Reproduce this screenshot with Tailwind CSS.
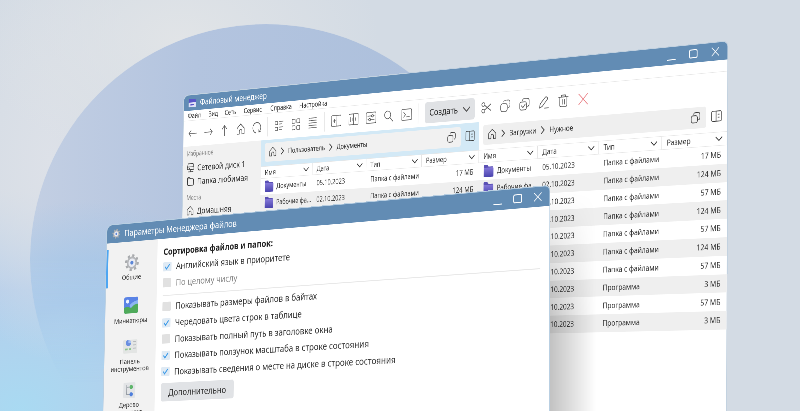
<!DOCTYPE html>
<html lang="ru">
<head>
    <meta charset="UTF-8">
    <meta name="viewport" content="width=device-width, initial-scale=1.0">
    <title>Файловый менеджер</title>
    <script src="https://cdn.jsdelivr.net/npm/@tailwindcss/browser@4"></script>
</head>
<body class="font-['Noto_Sans',sans-serif] text-[#333]">
<main class="relative w-[800px] h-[411px] overflow-hidden bg-[#d3dbe4]">

    <!-- icons -->
    <svg class="absolute w-0 h-0">
        <g class="*:fill-none *:stroke-current *:[stroke-width:1.7] *:[stroke-linecap:round] *:[stroke-linejoin:round]">
            <symbol id="i-back" viewBox="0 0 28 28"><path d="M26 14H2M9 7l-7 7 7 7"/></symbol>
            <symbol id="i-fwd" viewBox="0 0 28 28"><path d="M2 14h24M19 7l7 7-7 7"/></symbol>
            <symbol id="i-up" viewBox="0 0 28 28"><path d="M14 26V2M7 10l7-8 7 8"/></symbol>
            <symbol id="i-home" viewBox="0 0 28 28"><path d="M3 12 14 2l11 10v13h-7v-6c0-6-8-6-8 0v6H3z"/></symbol>
            <symbol id="i-reload" viewBox="0 0 28 28"><path d="M20 24a12 12 0 1 0-9 1.600M20 18v6h6"/></symbol>
            <symbol id="i-list" viewBox="0 0 28 28"><path d="M2 4h8v7H2zM2 17h8v7H2zM15 4h11M15 10h7M15 17h11M15 23h7"/></symbol>
            <symbol id="i-grid" viewBox="0 0 28 28"><rect x="3" y="2" width="9" height="9" rx="2"/><rect x="17" y="2" width="9" height="9" rx="2"/><rect x="3" y="17" width="9" height="9" rx="2"/><rect x="17" y="17" width="9" height="9" rx="2"/></symbol>
            <symbol id="i-lines" viewBox="0 0 28 28"><path d="M3 3h2M8 3h17M3 8.500h2M8 8.500h17M3 14h2M8 14h17M3 19.500h2M8 19.500h17M3 25h2M8 25h17"/></symbol>
            <symbol id="i-panel" viewBox="0 0 28 28"><rect x="0" y="2" width="28" height="24" rx="3"/><path d="M16 2v24M5 14h7M9 10.500v7"/></symbol>
            <symbol id="i-split" viewBox="0 0 28 28"><rect x="0" y="2" width="28" height="24" rx="3"/><path d="M14 2v24M6 9v10M10 11v6M19 11v6"/></symbol>
            <symbol id="i-side" viewBox="0 0 28 28"><rect x="1" y="2" width="26" height="24" rx="3"/><path d="M13 2v24M18 10h4M18 17h4"/></symbol>
            <symbol id="i-sliders" viewBox="0 0 28 28"><rect x="0" y="2" width="28" height="24" rx="3"/><path d="M5 10h10M21 10h2M5 18h2M13 18h10"/><circle cx="18" cy="10" r="2.500"/><circle cx="10" cy="18" r="2.500"/></symbol>
            <symbol id="i-search" viewBox="0 0 28 28"><circle cx="11" cy="11" r="8.500"/><path d="m17 17 9 9"/></symbol>
            <symbol id="i-term" viewBox="0 0 28 28"><rect x="0" y="2" width="28" height="24" rx="3"/><path d="m6 9 5 5-5 5M14 19h8"/></symbol>
            <symbol id="i-cut" viewBox="0 0 28 28"><circle cx="6" cy="7" r="4"/><circle cx="6" cy="21" r="4"/><path d="M9.500 9 26 21M9.500 19 26 7"/></symbol>
            <symbol id="i-copy" viewBox="0 0 28 28"><rect x="2" y="9" width="17" height="17" rx="5"/><path stroke-dasharray="2.500 3" d="M10 5c0-2 2-3 4-3h8c3 0 4 2 4 4v8c0 3-1 4-4 4"/></symbol>
            <symbol id="i-copy2" viewBox="0 0 28 28"><rect x="2" y="9" width="17" height="17" rx="5"/><path d="M9 6c0-3 2-4 5-4h7c4 0 5 2 5 5v7c0 3-1 5-4 5"/></symbol>
            <symbol id="i-check" viewBox="0 0 28 28"><rect x="2" y="9" width="17" height="17" rx="4"/><path d="M9 6c0-3 2-4 5-4h7c4 0 5 2 5 5v7c0 3-1 5-4 5M6 17l4 4 6-7"/></symbol>
            <symbol id="i-pen" viewBox="0 0 28 28"><path d="m3 25 2-9L18 3c3-2 7 2 5 5L10 22zM16 26h10"/></symbol>
            <symbol id="i-trash" viewBox="0 0 28 28"><path d="M2 6h24M9 6V2h10v4M5 6v17c0 2 1 3 3 3h12c2 0 3-1 3-3V6M11 11v10M17 11v10"/></symbol>
            <symbol id="i-x" viewBox="0 0 28 28"><path d="m3 3 22 22M25 3 3 25"/></symbol>
            <symbol id="i-close" viewBox="0 0 20 20"><path d="m2 2 16 16M18 2 2 18"/></symbol>
            <symbol id="i-down" viewBox="0 0 14 14"><path d="m1 4 6 6 6-6"/></symbol>
            <symbol id="i-right" viewBox="0 0 14 14"><path d="m4 1 6 6-6 6"/></symbol>
            <symbol id="i-disk" viewBox="0 0 28 28"><path d="M5 3h18l3 9v7H2v-7zM2 12h24M14 19v6M5 25h18M8 16h4"/></symbol>
            <symbol id="i-dir" viewBox="0 0 28 28"><path d="M3 7v15c0 2 1 3 3 3h16c2 0 3-1 3-3V10c0-2-1-3-3-3H3c0-2 1-4 3-4h5l3 4"/></symbol>
        </g>
        <linearGradient id="fold" x2="0" y2="1"><stop stop-color="#8478d8"/><stop offset="1" stop-color="#4a44ae"/></linearGradient>
        <symbol id="i-folder" viewBox="0 0 28 28"><path fill="#5a50b4" d="M1 3c0-1 1-2 2-2h8l3 4h10c1 0 2 1 2 2v8H1z"/><path fill="url(#fold)" d="M1 7h24c1 0 2 1 2 2v16c0 1-1 2-2 2H3c-1 0-2-1-2-2z"/></symbol>
    </svg>

    <!-- background -->
    <div class="absolute inset-0 bg-[radial-gradient(ellipse_200px_130px_at_180px_40px,#e1e4e7,transparent),radial-gradient(ellipse_110px_200px_at_50px_160px,#dde1e8,transparent),radial-gradient(ellipse_260px_220px_at_20px_411px,#a9daf2,#b4ceeb_55%,transparent)]"></div>
    <div class="absolute left-[30px] top-[24px] w-[472px] h-[472px] rounded-full bg-[radial-gradient(circle_at_12%_80%,#a5d6f3,#a0c6ea_18%,transparent_36%),linear-gradient(to_right,#c3cfe3,#b3c4df_35%,#abbfdb)] mask-[linear-gradient(to_bottom,black_50%,transparent_76%)]"></div>

    <!-- file manager -->
    <div id="manager" class="absolute left-0 top-0 w-[1480px] h-[800px] origin-top-left bg-white rounded-tl-[14px] rounded-tr-[10px] overflow-hidden flex flex-col shadow-[0_0_0_2px_#c3d2e0]">
        <div class="h-9 shrink-0 bg-[#628cb4] text-white flex items-center pl-[14px] pr-[18px]">
            <svg class="w-[26px] h-[22px]" viewBox="0 0 26 22">
                <path d="M3 2h20l2 9H1z" fill="#5a55c8"/><path d="M1 10h24v9c0 1-1 2-2 2H3c-1 0-2-1-2-2z" fill="#dfe0f6"/><path d="M7 14h12v3H7z" fill="#5a55c8"/>
            </svg>
            <span class="ml-[11px] text-[20px] grow">Файловый менеджер</span>
            <div class="flex gap-[32px] items-center">
                <i class="w-5 h-[2px] bg-white mt-4"></i>
                <i class="w-5 h-[18px] border-2 border-white rounded-[4px]"></i>
                <svg class="w-5 h-5"><use href="#i-close"/></svg>
            </div>
        </div>
        <div class="h-6 shrink-0 flex items-center text-[16px] pl-[13px] border-b border-[#e6e6e6]">
            <span class="w-[65px]">Файл</span><span class="w-[51px]">Вид</span><span class="w-[59px]">Сеть</span><span class="w-[81px]">Сервис</span><span class="w-[87px]">Справка</span><span>Настройка</span>
        </div>
        <div class="h-[60px] shrink-0 flex items-center pl-1 text-[#505050]">
            <div id="tools1" class="flex"></div>
            <div class="w-[2px] h-11 bg-[#e8e8e8] ml-[6px] mr-[9px]"></div>
            <div id="tools2" class="flex"></div>
            <div class="w-[2px] h-11 bg-[#e8e8e8] ml-[9px] mr-[8px]"></div>
            <div id="tools3" class="flex"></div>
            <div class="w-[2px] h-11 bg-[#eee] ml-[6px] mr-[18px]"></div>
            <div class="w-[135px] h-[46px] rounded-[6px] bg-[#e0e2e5] text-[#222] text-[20px] flex items-center justify-between px-3">Создать<svg class="w-5 h-5 text-[#555]"><use href="#i-down"/></svg></div>
            <div id="tools4" class="flex ml-[6px]"></div>
        </div>
        <div class="grow flex min-h-0">
            <div class="w-[242px] shrink-0 bg-[#f1f1f1] px-[12px] text-[20.5px] whitespace-nowrap flex flex-col">
                <div class="text-[15.5px] text-[#888] h-[36px] flex items-center">Избранное</div>
                <div class="h-[28px] flex items-center gap-[9px]"><svg class="w-6 h-6 shrink-0"><use href="#i-disk"/></svg>Сетевой диск 1</div>
                <div class="h-[36px] flex items-center gap-[9px]"><svg class="w-6 h-6 shrink-0"><use href="#i-dir"/></svg>Папка любимая</div>
                <div class="text-[15.5px] text-[#888] h-[42px] flex items-center">Места</div>
                <div class="h-[18px] flex items-center gap-[9px]"><svg class="w-6 h-6 shrink-0"><use href="#i-home"/></svg>Домашняя</div>
            </div>
            <div class="w-[621px] shrink-0 flex flex-col">
                <div class="h-[60px] shrink-0 bg-[#d3e9f6] flex items-center pl-3 pr-[12px]">
                    <div class="w-[560px] h-[43px] mt-[-4px] bg-[#f1f1f1] rounded-[5px] flex items-center px-3 text-[16px]">
                        <svg class="w-6 h-6"><use href="#i-home"/></svg>
                        <svg class="w-4 h-4 mx-[9px]"><use href="#i-right"/></svg>Пользователь
                        <svg class="w-4 h-4 mx-[9px]"><use href="#i-right"/></svg><span class="grow">Документы</span>
                        <svg class="w-[26px] h-[24px]"><use href="#i-copy2"/></svg>
                    </div>
                    <svg class="w-6 h-6 ml-[13px] mt-[-4px]"><use href="#i-side"/></svg>
                </div>
                <div class="files"></div>
            </div>
            <div class="w-[617px] shrink-0 flex flex-col">
                <div class="h-[60px] shrink-0 flex items-center pl-[11px]">
                    <div class="w-[557px] h-[43px] mt-[-4px] bg-[#efefef] rounded-[5px] flex items-center px-[12px] text-[16px]">
                        <svg class="w-6 h-6"><use href="#i-home"/></svg>
                        <svg class="w-4 h-4 mx-[9px]"><use href="#i-right"/></svg>Загрузки
                        <svg class="w-4 h-4 mx-[9px]"><use href="#i-right"/></svg><span class="grow">Нужное</span>
                        <svg class="w-[26px] h-[24px]"><use href="#i-copy2"/></svg>
                    </div>
                    <svg class="w-6 h-6 ml-[12px] mt-[-4px]"><use href="#i-side"/></svg>
                </div>
                <div class="files"></div>
            </div>
        </div>
    </div>

    <!-- shadow of the front window -->
    <div class="absolute left-[548px] top-[192px] w-[48px] h-[219px] bg-linear-to-r from-black/25 to-transparent mask-[linear-gradient(to_bottom,transparent,black_60%)]"></div>

    <!-- settings -->
    <div id="settings" class="absolute left-0 top-0 w-[1090px] h-[480px] origin-top-left bg-white rounded-tl-[14px] rounded-tr-[10px] overflow-hidden flex flex-col shadow-[0_0_0_2px_#b9cfe2]">
        <div class="h-10 shrink-0 bg-[#628cb4] text-white flex items-center pl-[14px] pr-[16px]">
            <svg class="w-[22px] h-[22px]"><use href="#gear"/></svg>
            <span class="ml-[11px] text-[19.2px] grow">Параметры Менеджера файлов</span>
            <div class="flex gap-[25px] items-center">
                <i class="w-5 h-[2px] bg-white mt-4"></i>
                <i class="w-5 h-[18px] border-2 border-white rounded-[4px]"></i>
                <svg class="w-5 h-5"><use href="#i-close"/></svg>
            </div>
        </div>
        <div class="grow flex min-h-0">
            <div class="w-[137px] shrink-0 bg-[#f2f2f2] relative flex flex-col items-center text-[15px] leading-[16px] text-center">
                <i class="absolute left-0 top-[14px] w-[5px] h-[86px] bg-[#4ea6f2]"></i>
                <svg class="w-[38px] h-[38px] mt-[28px] shrink-0" viewBox="0 0 36 36">
                    <symbol id="gear" viewBox="0 0 36 36">
                        <circle cx="18" cy="18" r="14.500" fill="none" stroke="#a9abae" stroke-width="6" stroke-dasharray="5.400 5.990"/>
                        <circle cx="18" cy="18" r="13" fill="#b5b7ba"/>
                        <circle cx="18" cy="18" r="9" fill="#e9ebf2"/>
                        <circle cx="18" cy="18" r="4" fill="#5c86d6"/>
                    </symbol>
                    <use href="#gear"/>
                </svg>
                <span class="mt-[4px]">Общие</span>
                <svg class="w-[38px] h-[38px] mt-[36px] shrink-0" viewBox="0 0 36 36">
                    <rect y="1" width="36" height="34" rx="4" fill="#5a83e6"/>
                    <path d="M14 19c5-7 13-9 22-11v9c-9-1-14 6-18 8z" fill="#8db5f3"/><circle cx="9" cy="10" r="4" fill="#eef4ff"/>
                    <path d="M0 24c8-6 14-1 18 0 5-5 11-9 18-8v15c0 2-2 4-4 4H4c-2 0-4-2-4-4z" fill="#4faa5b"/>
                </svg>
                <span class="mt-[6px]">Миниатюры</span>
                <svg class="w-[40px] h-[36px] mt-[31px] shrink-0" viewBox="0 0 40 36">
                    <rect x="1" y="4" width="38" height="30" rx="3" fill="#e3e5e4"/>
                    <circle cx="15" cy="11" r="7" fill="#6b8fe0"/><path d="M15 11V4a7 7 0 0 1 7 7z" fill="#a9c3f5"/>
                    <path d="M27 9h9M27 16h9M27 23h9" stroke="#b5b8bb" stroke-width="2"/><path d="M6 25h7M17 25h6" stroke="#8cc48c" stroke-width="4"/>
                </svg>
                <span class="mt-[7px]">Панель<br>инструментов</span>
                <svg class="w-[34px] h-[38px] mt-[21px] shrink-0" viewBox="0 0 34 38">
                    <rect x="1" y="2" width="32" height="34" rx="3" fill="#e2e4e6"/>
                    <path d="M10 7v21h10M10 12h10" fill="none" stroke="#999ea5" stroke-width="2"/>
                    <circle cx="22" cy="12" r="4.500" fill="#5fb56b"/><circle cx="22" cy="28" r="4.500" fill="#4f7fdc"/>
                </svg>
                <span class="mt-[4px]">Дерево<br>каталогов</span>
            </div>
            <div class="grow pl-[16px] pr-[20px] text-[19.35px] flex flex-col">
                <div class="font-bold text-[19px] h-[30px] mt-[14px] flex items-center text-[#222]">Сортировка файлов и папок:</div>
                <div id="sort" class="pb-[9px] border-b-2 border-[#e8e8e8]"></div>
                <div id="view" class="pt-[5px]"></div>
                <div class="mt-[7px] w-[189px] h-10 rounded-[5px] bg-[#e1e3e6] flex items-center justify-center text-[19.5px]">Дополнительно</div>
            </div>
        </div>
    </div>
</main>

    <script>
        function icons(id, names) {
            document.getElementById(id).innerHTML = names.map(n =>
                `<span class="w-[50px] flex justify-center"><svg class="w-7 h-7"><use href="#i-${n}"/></svg></span>`).join('');
        }
        icons('tools1', ['back', 'fwd', 'up', 'home', 'reload']);
        icons('tools2', ['list', 'grid', 'lines']);
        icons('tools3', ['panel', 'split', 'sliders', 'search', 'term']);
        icons('tools4', ['cut', 'copy', 'check', 'pen', 'trash', 'x']);
        document.querySelector('#tools4 span:last-child').classList.add('text-[#e8747a]');

        // file tables
        const rows = [
            ['Документы', '05.10.2023', 'Папка с файлами', '17 МБ'],
            ['Рабочие фа...', '02.10.2023', 'Папка с файлами', '124 МБ'],
            ['', '02.10.2023', 'Папка с файлами', '57 МБ'],
            ['', '02.10.2023', 'Папка с файлами', '124 МБ'],
            ['', '02.10.2023', 'Папка с файлами', '57 МБ'],
            ['', '02.10.2023', 'Папка с файлами', '124 МБ'],
            ['', '02.10.2023', 'Папка с файлами', '57 МБ'],
            ['', '02.10.2023', 'Программа', '3 МБ'],
            ['', '02.10.2023', 'Программа', '57 МБ'],
            ['', '02.10.2023', 'Программа', '3 МБ'],
        ];
        const head = ['Имя', 'Дата', 'Тип', 'Размер'].map(t =>
            `<div class="flex items-center justify-between pl-3 pr-[10px] border-r border-[#e2e2e2]">${t}<svg class="w-4 h-4"><use href="#i-down"/></svg></div>`).join('');
        const body = rows.map(r => `
            <div class="grid grid-cols-4 h-[36.8px] items-center even:bg-[#efefef] text-[16.2px] whitespace-nowrap">
                <div class="pl-3 flex items-center gap-2"><svg class="w-7 h-7 shrink-0"><use href="#i-folder"/></svg>${r[0]}</div>
                <div class="pl-3">${r[1]}</div>
                <div class="pl-3">${r[2]}</div>
                <div class="pr-[14px] text-right">${r[3]}</div>
            </div>`).join('');
        document.querySelectorAll('.files').forEach(el => {
            el.innerHTML = `<div class="grid grid-cols-4 h-[28px] text-[16px] border-y border-[#e6e6e6]">${head}</div><div>${body}</div>`;
        });

        // checkboxes: text, checked, disabled
        function checks(id, list) {
            document.getElementById(id).innerHTML = list.map(([t, on, off]) => `
                <div class="flex items-center h-[35.6px] gap-[12px] whitespace-nowrap ${off ? 'text-[#888]' : ''}">
                    <span class="w-[22px] h-[20px] rounded-[2px] flex items-center justify-center ${on ? 'bg-[#dfeaf4]' : 'bg-[#e1e1e1]'}">${on ? '<svg class="w-4 h-4" viewBox="0 0 16 16"><path d="m2 8 4 5 8-10" fill="none" stroke="#3d9be9" stroke-width="2.5"/></svg>' : ''}</span>${t}
                </div>`).join('');
        }
        checks('sort', [['Английский язык в приоритете', 1], ['По целому числу', 0, 1]]);
        checks('view', [
            ['Показывать размеры файлов в байтах', 0],
            ['Чередовать цвета строк в таблице', 1],
            ['Показывать полный путь в заголовке окна', 0],
            ['Показывать ползунок масштаба в строке состояния', 1],
            ['Показывать сведения о месте на диске в строке состояния', 1],
        ]);

        // put a w x h area onto four corners: tl, tr, br, bl
        function project(id, w, h, [[x0, y0], [x1, y1], [x2, y2], [x3, y3]]) {
            const dx1 = x1 - x2, dx2 = x3 - x2, sx = x0 - x1 + x2 - x3;
            const dy1 = y1 - y2, dy2 = y3 - y2, sy = y0 - y1 + y2 - y3;
            const d = dx1 * dy2 - dx2 * dy1;
            const g = (sx * dy2 - dx2 * sy) / d, k = (dx1 * sy - sx * dy1) / d;
            const m = [
                (x1 - x0 + g * x1) / w, (y1 - y0 + g * y1) / w, 0, g / w,
                (x3 - x0 + k * x3) / h, (y3 - y0 + k * y3) / h, 0, k / h,
                0, 0, 1, 0,
                x0, y0, 0, 1
            ];
            document.getElementById(id).style.transform = `matrix3d(${m.map(v => v.toFixed(10)).join(',')})`;
        }
        project('manager', 1480, 576, [[184, 96], [727.5, 41.5], [726.5, 329.5], [181, 341.5]]);
        project('settings', 1090, 450, [[107.3, 225.7], [549.5, 186], [549, 411], [103, 428.8]]);
    </script>
</body>
</html>
